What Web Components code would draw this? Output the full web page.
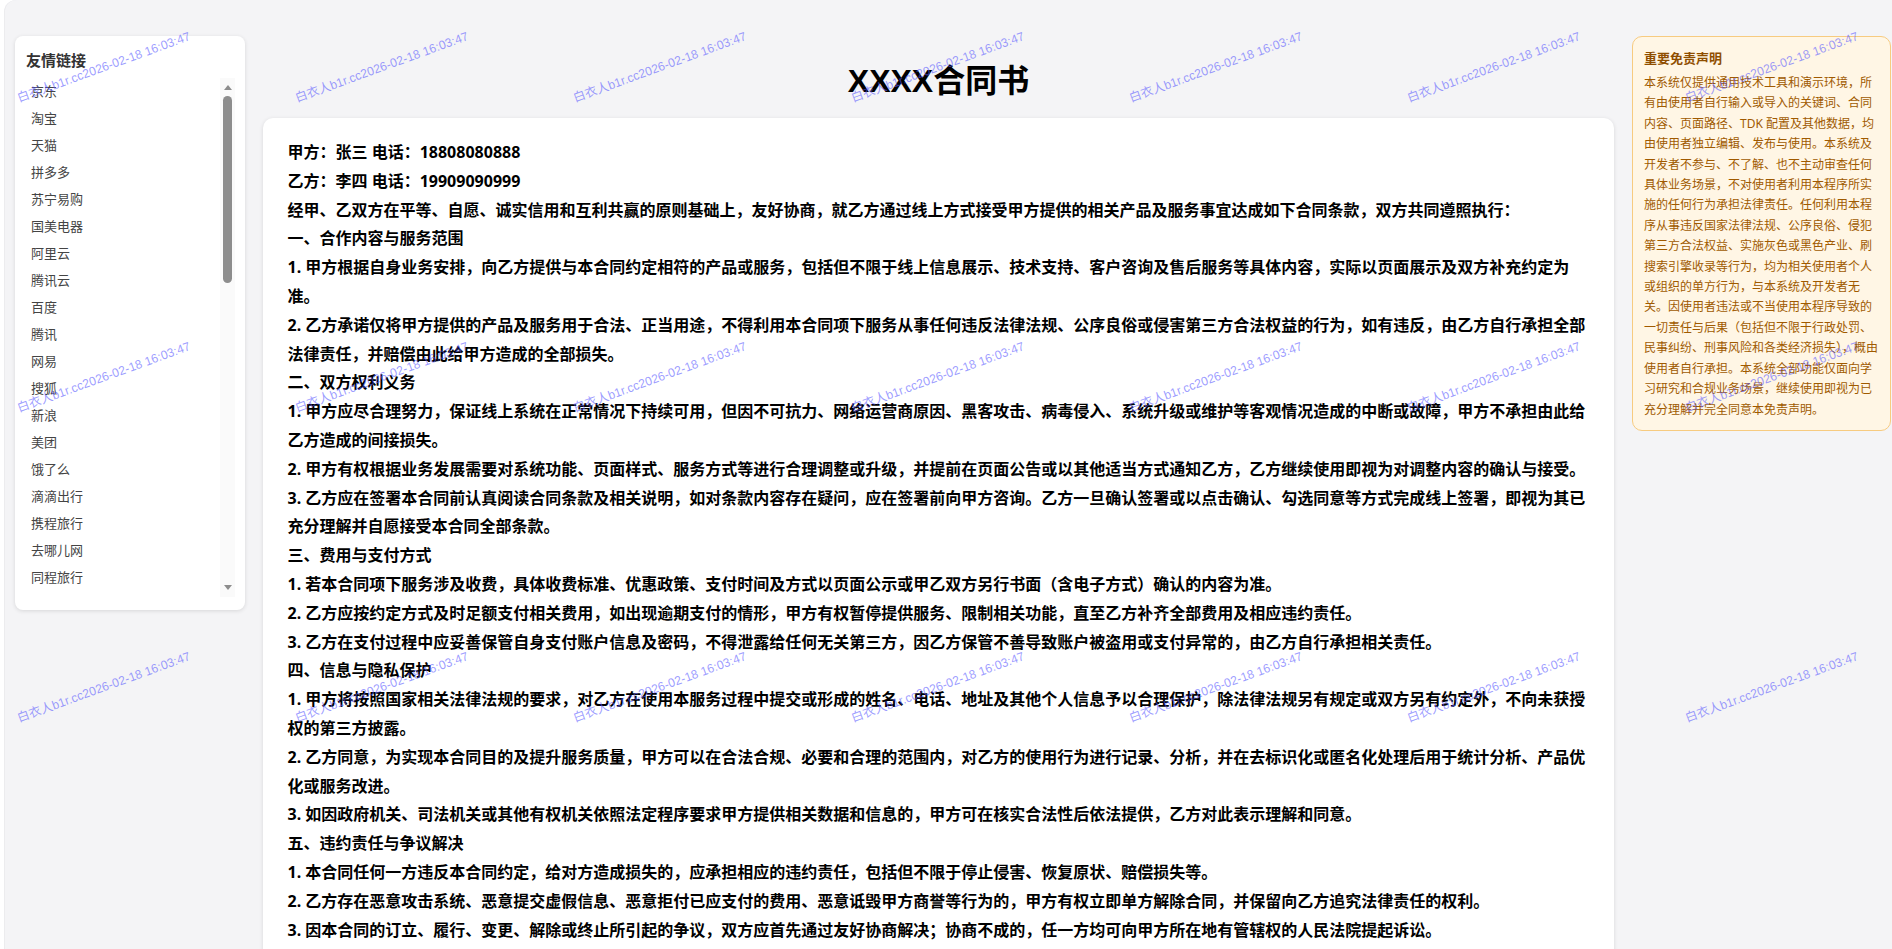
<!DOCTYPE html>
<html lang="zh-CN">
<head>
<meta charset="utf-8">
<title>XXXX合同书</title>
<style>
html, body { margin: 0; height: 100%; overflow: hidden; background: #fff; }
body { font-family: "Noto Sans", "Noto Sans CJK SC", sans-serif; }
</style>
</head>
<body>
<page-shell>
  <link-sidebar slot="left" heading="友情链接">
    <span>京东</span><span>淘宝</span><span>天猫</span><span>拼多多</span><span>苏宁易购</span>
    <span>国美电器</span><span>阿里云</span><span>腾讯云</span><span>百度</span><span>腾讯</span>
    <span>网易</span><span>搜狐</span><span>新浪</span><span>美团</span><span>饿了么</span>
    <span>滴滴出行</span><span>携程旅行</span><span>去哪儿网</span><span>同程旅行</span>
  </link-sidebar>

  <contract-card heading="XXXX合同书">
    <p>甲方：张三 电话：18808080888</p>
    <p>乙方：李四 电话：19909090999</p>
    <p>经甲、乙双方在平等、自愿、诚实信用和互利共赢的原则基础上，友好协商，就乙方通过线上方式接受甲方提供的相关产品及服务事宜达成如下合同条款，双方共同遵照执行：</p>
    <p>一、合作内容与服务范围</p>
    <p>1. 甲方根据自身业务安排，向乙方提供与本合同约定相符的产品或服务，包括但不限于线上信息展示、技术支持、客户咨询及售后服务等具体内容，实际以页面展示及双方补充约定为准。</p>
    <p>2. 乙方承诺仅将甲方提供的产品及服务用于合法、正当用途，不得利用本合同项下服务从事任何违反法律法规、公序良俗或侵害第三方合法权益的行为，如有违反，由乙方自行承担全部法律责任，并赔偿由此给甲方造成的全部损失。</p>
    <p>二、双方权利义务</p>
    <p>1. 甲方应尽合理努力，保证线上系统在正常情况下持续可用，但因不可抗力、网络运营商原因、黑客攻击、病毒侵入、系统升级或维护等客观情况造成的中断或故障，甲方不承担由此给乙方造成的间接损失。</p>
    <p>2. 甲方有权根据业务发展需要对系统功能、页面样式、服务方式等进行合理调整或升级，并提前在页面公告或以其他适当方式通知乙方，乙方继续使用即视为对调整内容的确认与接受。</p>
    <p>3. 乙方应在签署本合同前认真阅读合同条款及相关说明，如对条款内容存在疑问，应在签署前向甲方咨询。乙方一旦确认签署或以点击确认、勾选同意等方式完成线上签署，即视为其已充分理解并自愿接受本合同全部条款。</p>
    <p>三、费用与支付方式</p>
    <p>1. 若本合同项下服务涉及收费，具体收费标准、优惠政策、支付时间及方式以页面公示或甲乙双方另行书面（含电子方式）确认的内容为准。</p>
    <p>2. 乙方应按约定方式及时足额支付相关费用，如出现逾期支付的情形，甲方有权暂停提供服务、限制相关功能，直至乙方补齐全部费用及相应违约责任。</p>
    <p>3. 乙方在支付过程中应妥善保管自身支付账户信息及密码，不得泄露给任何无关第三方，因乙方保管不善导致账户被盗用或支付异常的，由乙方自行承担相关责任。</p>
    <p>四、信息与隐私保护</p>
    <p>1. 甲方将按照国家相关法律法规的要求，对乙方在使用本服务过程中提交或形成的姓名、电话、地址及其他个人信息予以合理保护，除法律法规另有规定或双方另有约定外，不向未获授权的第三方披露。</p>
    <p>2. 乙方同意，为实现本合同目的及提升服务质量，甲方可以在合法合规、必要和合理的范围内，对乙方的使用行为进行记录、分析，并在去标识化或匿名化处理后用于统计分析、产品优化或服务改进。</p>
    <p>3. 如因政府机关、司法机关或其他有权机关依照法定程序要求甲方提供相关数据和信息的，甲方可在核实合法性后依法提供，乙方对此表示理解和同意。</p>
    <p>五、违约责任与争议解决</p>
    <p>1. 本合同任何一方违反本合同约定，给对方造成损失的，应承担相应的违约责任，包括但不限于停止侵害、恢复原状、赔偿损失等。</p>
    <p>2. 乙方存在恶意攻击系统、恶意提交虚假信息、恶意拒付已应支付的费用、恶意诋毁甲方商誉等行为的，甲方有权立即单方解除合同，并保留向乙方追究法律责任的权利。</p>
    <p>3. 因本合同的订立、履行、变更、解除或终止所引起的争议，双方应首先通过友好协商解决；协商不成的，任一方均可向甲方所在地有管辖权的人民法院提起诉讼。</p>
  </contract-card>

  <notice-card slot="right" heading="重要免责声明">本系统仅提供通用技术工具和演示环境，所有由使用者自行输入或导入的关键词、合同内容、页面路径、TDK 配置及其他数据，均由使用者独立编辑、发布与使用。本系统及开发者不参与、不了解、也不主动审查任何具体业务场景，不对使用者利用本程序所实施的任何行为承担法律责任。任何利用本程序从事违反国家法律法规、公序良俗、侵犯第三方合法权益、实施灰色或黑色产业、刷搜索引擎收录等行为，均为相关使用者个人或组织的单方行为，与本系统及开发者无关。因使用者违法或不当使用本程序导致的一切责任与后果（包括但不限于行政处罚、民事纠纷、刑事风险和各类经济损失），概由使用者自行承担。本系统全部功能仅面向学习研究和合规业务场景，继续使用即视为已充分理解并完全同意本免责声明。</notice-card>

  <water-mark slot="overlay" text="白衣人b1r.cc2026-02-18 16:03:47"></water-mark>
</page-shell>

<script>
"use strict"

class PageShell extends HTMLElement {
    constructor() {
        super();
        this.attachShadow({mode: "open"});
        this.shadowRoot.innerHTML = `
        <style>
        :host { display: block; height: 949px; overflow: hidden; position: relative; }
        .frame {
            margin-left: 4px;
            height: 100%;
            box-sizing: border-box;
            background: #f4f4f6;
            border-top-left-radius: 12px;
            box-shadow: inset 1px 0 0 #ececee;
            padding: 36px 0 0 11px;
            display: grid;
            grid-template-columns: 230px 1351px 259px;
            column-gap: 18px;
            align-items: start;
        }
        </style>
        <div class="frame">
            <slot name="left"></slot>
            <slot></slot>
            <slot name="right"></slot>
        </div>
        <slot name="overlay"></slot>`;
    }
}

class LinkSidebar extends HTMLElement {
    constructor() {
        super();
        this.attachShadow({mode: "open"});
    }

    connectedCallback() {
        this.shadowRoot.innerHTML = `
        <style>
        :host {
            display: block;
            height: 574px;
            box-sizing: border-box;
            background: #fff;
            border-radius: 8px;
            box-shadow: 0 1px 4px rgba(0,0,0,.12);
            padding: 14px 10px 13px 10px;
        }
        h3 { margin: 0 0 8px 1px; font-size: 15px; line-height: 20px; font-weight: 700; color: #333; }
        .body { display: flex; height: 519px; }
        .list { flex: 1; overflow: hidden; padding: 0 0 0 6px; }
        ::slotted(span) {
            display: block;
            height: 27px;
            line-height: 27px;
            font-size: 13px;
            color: #444;
        }
        .bar {
            width: 15px;
            background: #fafafa;
            display: flex;
            flex-direction: column;
            align-items: center;
            justify-content: space-between;
            padding: 7px 0;
            box-sizing: border-box;
        }
        .thumb { width: 9px; height: 187px; background: #8d8d8d; border-radius: 5px; margin-top: 6px; margin-bottom: auto; }
        .up { width: 0; height: 0; border: 4.5px solid transparent; border-top: 0; border-bottom: 5px solid #8d8d8d; }
        .down { width: 0; height: 0; border: 4.5px solid transparent; border-bottom: 0; border-top: 5px solid #8d8d8d; }
        </style>
        <h3>${this.getAttribute('heading')}</h3>
        <div class="body">
            <div class="list"><slot></slot></div>
            <div class="bar"><div class="up"></div><div class="thumb"></div><div class="down"></div></div>
        </div>`;
    }
}

class ContractCard extends HTMLElement {
    constructor() {
        super();
        this.attachShadow({mode: "open"});
    }

    connectedCallback() {
        this.shadowRoot.innerHTML = `
        <style>
        :host { display: block; }
        h1 {
            margin: 24px 0 16px;
            font-family: "Liberation Sans", "Noto Sans CJK SC", sans-serif;
            font-size: 32px;
            line-height: 42px;
            font-weight: 700;
            text-align: center;
            color: #000;
        }
        .card {
            background: #fff;
            border-radius: 10px;
            box-shadow: 0 1px 4px rgba(0,0,0,.12);
            padding: 20px 25px 25px 24.5px;
        }
        ::slotted(p) {
            margin: 0;
            font-size: 16px;
            line-height: 28.8px;
            font-weight: 700;
            color: #000;
        }
        </style>
        <h1>${this.getAttribute('heading')}</h1>
        <div class="card"><slot></slot></div>`;
    }
}

class NoticeCard extends HTMLElement {
    constructor() {
        super();
        this.attachShadow({mode: "open"});
    }

    connectedCallback() {
        this.shadowRoot.innerHTML = `
        <style>
        :host {
            display: block;
            box-sizing: border-box;
            height: 395px;
            background: #fff6e5;
            border: 1px solid #f7cb80;
            border-radius: 10px;
            padding: 11px 11px;
            font-size: 12px;
            line-height: 20.4px;
            color: #a05a00;
        }
        h4 { margin: 0 0 5px; font-size: 13px; line-height: 20px; font-weight: 700; color: #8f4e00; }
        </style>
        <h4>${this.getAttribute('heading')}</h4>
        <slot></slot>`;
    }
}

class WaterMark extends HTMLElement {
    constructor() {
        super();
        this.attachShadow({mode: "open"});
    }

    connectedCallback() {
        let marks = "";
        for (let i = 0; i < 21; i++) {
            marks += `<span>${this.getAttribute('text')}</span>`;
        }
        this.shadowRoot.innerHTML = `
        <style>
        :host {
            position: absolute;
            inset: 0;
            overflow: hidden;
            pointer-events: none;
            display: grid;
            grid-template-columns: repeat(7, 278px);
            grid-template-rows: repeat(3, 310px);
            padding: 91px 0 0 15px;
            justify-items: start;
            align-items: start;
        }
        span {
            font-family: "Liberation Sans", "Noto Sans CJK SC", sans-serif;
            font-size: 12.25px;
            line-height: 17px;
            white-space: nowrap;
            color: rgba(90,90,255,.6);
            transform: rotate(-20deg);
            transform-origin: 0 0;
        }
        </style>
        ${marks}`;
    }
}

customElements.define('page-shell', PageShell);
customElements.define('link-sidebar', LinkSidebar);
customElements.define('contract-card', ContractCard);
customElements.define('notice-card', NoticeCard);
customElements.define('water-mark', WaterMark);
</script>
</body>
</html>
